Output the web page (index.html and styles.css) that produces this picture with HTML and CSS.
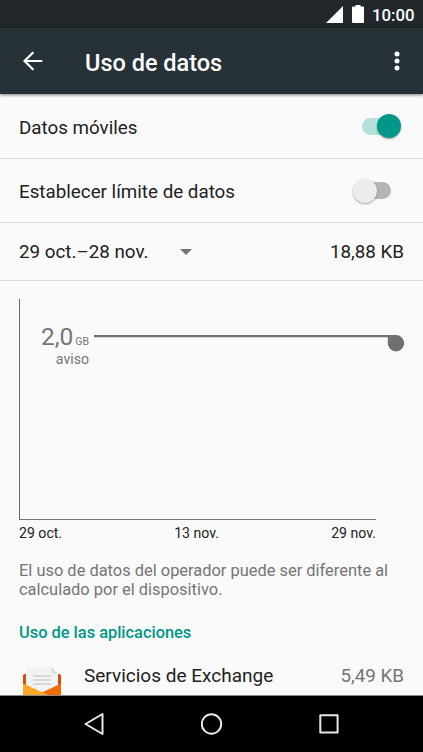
FILE: index.html
```html
<!DOCTYPE html>
<html lang="es">
<head>
<meta charset="utf-8">
<title>Uso de datos</title>
<link rel="stylesheet" href="styles.css">
</head>
<body>
<div class="screen">
  <div class="status">
    <svg class="signal" width="17" height="17" viewBox="0 0 17 17"><path d="M0 17L17 0V17Z"/></svg>
    <svg class="battery" width="12" height="18" viewBox="0 0 12 18"><path d="M3.5 0h5v1.6H11a1 1 0 0 1 1 1V17a1 1 0 0 1-1 1H1a1 1 0 0 1-1-1V2.600a1 1 0 0 1 1-1h2.500z"/></svg>
    <span class="time">10:00</span>
  </div>
  <header class="appbar">
    <svg class="back" width="20" height="20" viewBox="0 0 20 20"><path d="M10.300 1.200L1.500 10l8.800 8.800M1.500 10H19.300"/></svg>
    <h1 class="title">Uso de datos</h1>
    <svg class="more" width="6" height="20" viewBox="0 0 6 20"><circle cx="3" cy="3" r="2.500"/><circle cx="3" cy="10" r="2.500"/><circle cx="3" cy="17" r="2.500"/></svg>
  </header>
  <main class="content">
    <div class="row">
      <span>Datos móviles</span>
      <div class="switch on"><div class="thumb"></div></div>
    </div>
    <div class="row">
      <span>Establecer límite de datos</span>
      <div class="switch"><div class="thumb"></div></div>
    </div>
    <div class="row cycle">
      <span class="period">29 oct.–28 nov.</span>
      <svg class="caret" width="12" height="6" viewBox="0 0 12 6"><path d="M0 0H12L6 6Z"/></svg>
      <span class="total">18,88 KB</span>
    </div>
    <section class="chart">
      <div class="limit">
        <div class="limit-label">
          <div class="amount">2,0<span class="unit">GB</span></div>
          <div class="warn">aviso</div>
        </div>
        <svg class="sweep" width="311" height="17" viewBox="0 0 311 17"><path d="M0 0H302A8.200 8.200 0 1 1 293.800 8.200V2.200H0Z"/></svg>
      </div>
    </section>
    <div class="axis"><span>29 oct.</span><span>13 nov.</span><span>29 nov.</span></div>
    <p class="note">El uso de datos del operador puede ser diferente al calculado por el dispositivo.</p>
    <h2 class="section">Uso de las aplicaciones</h2>
    <div class="app">
      <svg class="mail" width="38" height="30" viewBox="0 0 38 30">
        <path fill="#d84a12" d="M2 7H36a2 2 0 0 1 2 2V30H0V9a2 2 0 0 1 2-2z"/>
        <path fill="#f3f3f3" d="M3 2a2 2 0 0 1 2-2H28.500l6.500 7V20L20 26 3 20z"/>
        <path fill="#dedede" d="M28.500 0l6.500 7H30.500a2 2 0 0 1-2-2z"/>
        <path stroke="#cfcfcf" stroke-width="1.500" d="M10 9H28M10 13H28M10 17H28"/>
        <path fill="#ef6c00" d="M38 16.500L19 25.500V30H38z"/>
        <path fill="#ffa726" d="M0 16.500L30 30H0z"/>
      </svg>
      <span class="name">Servicios de Exchange</span>
      <span class="usage">5,49 KB</span>
    </div>
  </main>
  <nav class="nav">
    <svg width="22" height="24" viewBox="0 0 22 24"><path d="M19.500 2V22L2.500 12Z"/></svg>
    <svg width="22" height="24" viewBox="0 0 22 24"><circle cx="10.500" cy="12" r="9.700"/></svg>
    <svg width="22" height="24" viewBox="0 0 22 24"><rect x="2.300" y="3.200" width="17.300" height="17.300"/></svg>
  </nav>
</div>
</body>
</html>
```
FILE: styles.css
```css
* { box-sizing: border-box; }
body { margin: 0; }
svg { display: block; flex: none; }
.screen {
  width: 423px; height: 752px; overflow: hidden;
  display: flex; flex-direction: column;
  background: #fafafa; color: #212121;
  font: 18.8px/22px Roboto, "Liberation Sans", sans-serif;
}
.status {
  flex: none; height: 28px; background: #21272b; color: #fff;
  display: flex; justify-content: flex-end; align-items: flex-start;
  padding: 5px 9px 0 0; fill: #fff;
}
.signal { margin: 1px 9px 0 0; }
.battery { margin-right: 8px; }
.time { font-size: 16.8px; line-height: 20px; font-weight: 500; width: 42px; text-align: right; white-space: nowrap; }
.appbar {
  flex: none; height: 66px; background: #263238; color: #fff;
  display: flex; align-items: center; padding: 0 23px;
  box-shadow: 0 1px 3px rgba(0,0,0,.5); z-index: 1;
}
.back { fill: none; stroke: #fff; stroke-width: 2.2; }
.title { margin: 3px auto 0 42px; font-size: 23.5px; line-height: 28px; font-weight: 500; }
.more { fill: #fff; }
.content { flex: 1; min-height: 0; overflow: hidden; border-bottom: 1px solid #888; }
.row {
  height: 64.5px; display: flex; align-items: center; justify-content: space-between;
  padding: 4px 19px 0; border-bottom: 1px solid #dadada;
}
.switch {
  width: 30px; height: 17px; border-radius: 9px; background: #b5b5b5;
  position: relative; margin: -3px 13px 0 0;
}
.thumb {
  position: absolute; top: -3.5px; left: -8px; width: 24px; height: 24px;
  border-radius: 50%; background: #ececec; box-shadow: 0 1px 2px rgba(0,0,0,.35);
}
.on { background: #b5dfda; width: 38px; margin-right: 4px; }
.on .thumb { left: 14.500px; background: #009688; }
.cycle { height: 58px; justify-content: flex-start; padding-top: 0; }
.caret { fill: #757575; margin-left: 31px; }
.total { margin-left: auto; }
.chart {
  width: 357px; height: 221px; margin: 18px 0 0 19px;
  border-left: 1px solid #666; border-bottom: 1px solid #777;
}
.limit { display: flex; padding-top: 24px; color: #757575; }
.limit-label { width: 69px; flex: none; text-align: right; }
.amount { font-size: 24.5px; line-height: 27px; height: 27px; white-space: nowrap; }
.unit { font-size: 10.5px; margin-left: 2px; }
.warn { font-size: 14.1px; line-height: 16px; margin-top: 1px; }
.sweep { fill: #707070; margin: 12px 0 0 5px; }
.axis {
  width: 357px; margin: 5px 0 0 19px; font-size: 14.1px; line-height: 17px;
  display: flex; justify-content: space-between;
}
.note { margin: 19px 19px 0; font-size: 16.43px; line-height: 19px; color: #757575; }
.section { margin: 24px 19px 0; font-size: 16.4px; line-height: 20px; font-weight: 500; color: #009688; }
.app { display: flex; align-items: flex-start; padding: 22px 19px 0 23px; }
.mail { margin-top: 2px; }
.name { margin-left: 23px; font-size: 19px; }
.usage { margin-left: auto; color: #757575; }
.nav {
  flex: none; height: 56px; background: #000; display: flex; align-items: center;
  justify-content: space-between; padding: 0 83px;
  fill: none; stroke: #e8e8e8; stroke-width: 2; stroke-linejoin: round;
}
```
